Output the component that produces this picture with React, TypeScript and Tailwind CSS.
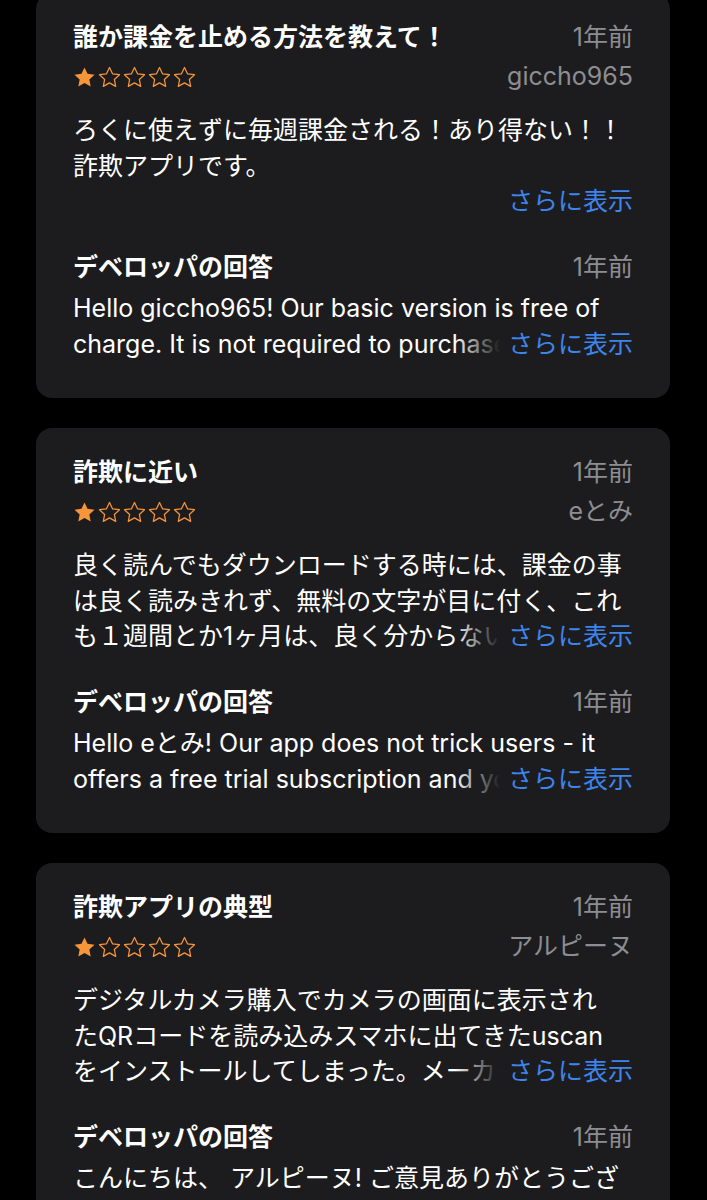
import React from "react";

type Review = {
  title: string;
  author: string;
  body: string[];
  bodyMore?: string;
  moreAlone?: boolean;
  reply: string[];
  replyMore?: string;
};

const reviews: Review[] = [
  {
    title: "誰か課金を止める方法を教えて！",
    author: "giccho965",
    body: ["ろくに使えずに毎週課金される！あり得ない！！", "詐欺アプリです。"],
    moreAlone: true,
    reply: ["Hello giccho965! Our basic version is free of"],
    replyMore: "charge. It is not required to purchase",
  },
  {
    title: "詐欺に近い",
    author: "eとみ",
    body: [
      "良く読んでもダウンロードする時には、課金の事",
      "は良く読みきれず、無料の文字が目に付く、これ",
    ],
    bodyMore: "も１週間とか1ヶ月は、良く分からない",
    reply: ["Hello eとみ! Our app does not trick users - it"],
    replyMore: "offers a free trial subscription and you",
  },
  {
    title: "詐欺アプリの典型",
    author: "アルピーヌ",
    body: [
      "デジタルカメラ購入でカメラの画面に表示され",
      "たQRコードを読み込みスマホに出てきたuscan",
    ],
    bodyMore: "をインストールしてしまった。メーカー",
    reply: ["こんにちは、 アルピーヌ! ご意見ありがとうござ", "います。"],
  },
];

const MORE = "さらに表示";

const Star = ({ filled }: { filled: boolean }) => (
  <svg width="25" height="25" viewBox="0 0 24 24">
    <path
      d="M12 2.4l2.9 6.1 6.7.8-4.95 4.6 1.3 6.65L12 17.2l-5.95 3.35 1.3-6.65L2.4 9.3l6.7-.8z"
      fill={filled ? "#f7953a" : "none"}
      stroke="#f7953a"
      strokeWidth={filled ? 0 : 1.2}
      strokeLinejoin="round"
    />
  </svg>
);

const TruncLine = ({ text }: { text: string }) => (
  <div className="flex items-center">
    <div className="relative min-w-0 flex-1 overflow-hidden whitespace-nowrap">
      {text}
      <div className="absolute inset-y-0 right-0 w-[46px] bg-linear-to-r from-transparent to-[#1c1c1e]" />
    </div>
    <span className="ml-[8px] shrink-0 text-[#3d84ec]">{MORE}</span>
  </div>
);

const ReviewCard = ({ review }: { review: Review }) => {
  return (
    <div className="rounded-[16px] bg-[#1c1c1e] px-[37px] pt-[30px] pb-[36px]">
      <div className="flex h-[30px] items-center justify-between">
        <div className="text-[25px] font-bold text-white">{review.title}</div>
        <div className="text-[25px] text-[#8d8d92]">1年前</div>
      </div>
      <div className="mt-[9px] flex h-[30px] items-center justify-between">
        <div className="-ml-[1px] flex">
          <Star filled />
          <Star filled={false} />
          <Star filled={false} />
          <Star filled={false} />
          <Star filled={false} />
        </div>
        <div className="text-[25px] text-[#8d8d92]">{review.author}</div>
      </div>

      <div className="mt-[21px] text-[25px] leading-[35.5px] text-white">
        {review.body.map((line, i) => (
          <div key={i} className="whitespace-nowrap">
            {line}
          </div>
        ))}
        {review.bodyMore && <TruncLine text={review.bodyMore} />}
        {review.moreAlone && <div className="text-right text-[#3d84ec]">{MORE}</div>}
      </div>

      <div className="mt-[33.5px] flex h-[30px] items-center justify-between">
        <div className="text-[25px] font-bold text-white">デベロッパの回答</div>
        <div className="text-[25px] text-[#8d8d92]">1年前</div>
      </div>
      <div className="mt-[8px] text-[25px] leading-[35.5px] text-white">
        {review.reply.map((line, i) => (
          <div key={i} className="whitespace-nowrap">
            {line}
          </div>
        ))}
        {review.replyMore && <TruncLine text={review.replyMore} />}
      </div>
    </div>
  );
};

const App = () => {
  return (
    <div className="h-[1200px] overflow-hidden bg-black font-['Inter','Noto_Sans_CJK_JP',sans-serif]">
      <div className="-mt-[7px] flex flex-col gap-[30px] pl-[36px] pr-[37px]">
        {reviews.map((r, i) => (
          <ReviewCard key={i} review={r} />
        ))}
      </div>
    </div>
  );
};

export default App;
